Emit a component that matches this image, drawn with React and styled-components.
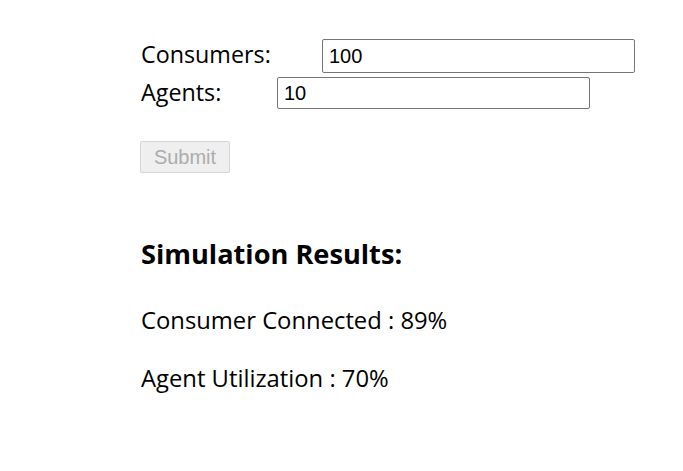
import React from "react";
import styled, { createGlobalStyle } from "styled-components";

const Global = createGlobalStyle`
  html, body { margin: 0; padding: 0; background: #fff; }
  body { font-family: "Open Sans", "Noto Sans", sans-serif; color: #000; }
`;

const Page = styled.div`
  padding: 39px 0 0 141px;
  display: flex;
  flex-direction: column;
`;

const Form = styled.form`
  display: flex;
  flex-direction: column;
  gap: 4px;
`;

const Row = styled.div`
  display: flex;
  align-items: center;
`;

const Label = styled.label`
  font-size: 23.3px;
  line-height: 28px;
  padding-bottom: ${(p) => p.$lift}px;
  width: ${(p) => p.$w}px;
  flex: none;
`;

const Input = styled.input`
  box-sizing: border-box;
  width: 313px;
  height: ${(p) => p.$h}px;
  border: 1px solid #767676;
  border-radius: 2px;
  padding: 0 6px;
  font-family: "Liberation Sans", Arial, sans-serif;
  font-size: 20px;
  color: #000;
  outline: none;
`;

const Submit = styled.button`
  box-sizing: border-box;
  width: 90px;
  height: 32px;
  margin-top: 28px;
  margin-left: -1px;
  border: 1px solid #d6d6d6;
  border-radius: 2px;
  background: #efefef;
  color: #acacac;
  font-family: "Liberation Sans", Arial, sans-serif;
  font-size: 20px;
  padding: 0;
`;

const Results = styled.section`
  margin-top: 64px;
  display: flex;
  flex-direction: column;
`;

const Heading = styled.h2`
  margin: 0;
  font-size: 27.2px;
  line-height: 34px;
  font-weight: 700;
`;

const Stat = styled.p`
  margin: ${(p) => p.$mt}px 0 0;
  font-size: 23.8px;
  line-height: 30px;
`;

export default function App() {
  return (
    <>
      <Global />
      <Page>
        <Form onSubmit={(e) => e.preventDefault()}>
          <Row>
            <Label $w={181} $lift={4}>Consumers:</Label>
            <Input $h={34} defaultValue="100" />
          </Row>
          <Row>
            <Label $w={136} $lift={2}>Agents:</Label>
            <Input $h={32} defaultValue="10" />
          </Row>
          <div>
            <Submit type="submit" disabled>Submit</Submit>
          </div>
        </Form>
        <Results>
          <Heading>Simulation Results:</Heading>
          <Stat $mt={34}>Consumer Connected : 89%</Stat>
          <Stat $mt={28}>Agent Utilization : 70%</Stat>
        </Results>
      </Page>
    </>
  );
}
